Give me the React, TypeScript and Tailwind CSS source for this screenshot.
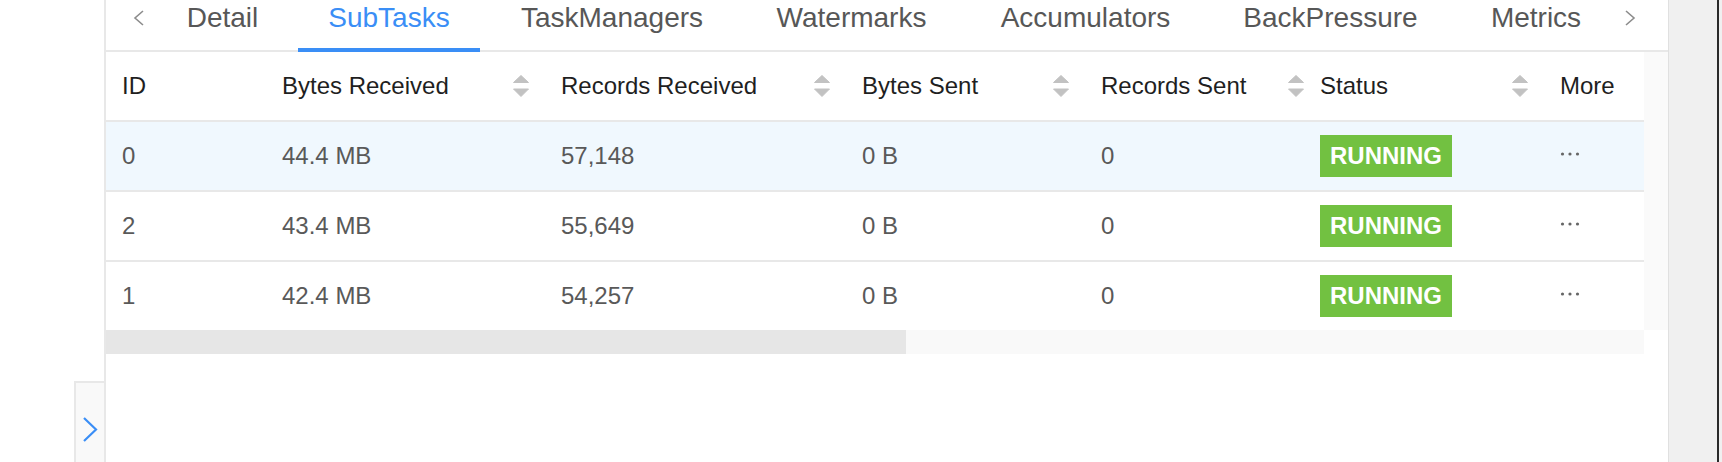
import React from "react";

const cols = "grid grid-cols-[160px_279px_301px_239px_219px_240px_100px]";

function SortIcon() {
  return (
    <svg width="16" height="23" viewBox="0 0 16 23" className="shrink-0">
      <path d="M8 0.5 L15.5 7.5 L0.5 7.5 Z" fill="#c2c2c2" strokeLinejoin="round" stroke="#c2c2c2" strokeWidth="1" />
      <path d="M0.5 14 L15.5 14 L8 21.5 Z" fill="#c2c2c2" strokeLinejoin="round" stroke="#c2c2c2" strokeWidth="1" />
    </svg>
  );
}

function Dots() {
  return (
    <svg width="20" height="6" viewBox="0 0 20 6">
      <circle cx="2.5" cy="3" r="1.6" fill="#666" />
      <circle cx="10" cy="3" r="1.6" fill="#666" />
      <circle cx="17.5" cy="3" r="1.6" fill="#666" />
    </svg>
  );
}

const tabs: { label: string; w: string; active?: boolean }[] = [
  { label: "Detail", w: "w-[135px]" },
  { label: "SubTasks", w: "w-[182px]", active: true },
  { label: "TaskManagers", w: "w-[248px]" },
  { label: "Watermarks", w: "w-[215px]" },
  { label: "Accumulators", w: "w-[237px]" },
  { label: "BackPressure", w: "w-[237px]" },
  { label: "Metrics", w: "w-[158px]" },
];

const rows = [
  { id: "0", br: "44.4 MB", rr: "57,148", hover: true },
  { id: "2", br: "43.4 MB", rr: "55,649" },
  { id: "1", br: "42.4 MB", rr: "54,257" },
];

export default function App() {
  return (
    <div className="w-[1722px] h-[462px] flex bg-white overflow-hidden font-['Liberation_Sans',Arial,sans-serif]">
      {/* left gutter with collapse button */}
      <div className="w-[104px] shrink-0 flex flex-col">
        <div className="flex-1" />
        <div className="ml-[74px] h-[81px] w-[30px] border-l-2 border-t-2 border-[#e8e8e8] bg-[#f9f9f9] flex justify-center pt-[34px]">
          <svg width="16" height="25" viewBox="0 0 16 25">
            <polyline points="2,1 14,12.5 2,24" fill="none" stroke="#3a8ef6" strokeWidth="2.2" />
          </svg>
        </div>
      </div>

      {/* main panel */}
      <div className="w-[1564px] shrink-0 border-l-2 border-[#e8e8e8] flex flex-col">
        {/* tab bar */}
        <div className="h-[52px] shrink-0 border-b-2 border-[#e8e8e8] flex items-start">
          <div className="w-[49px] shrink-0 pl-[26px] pt-[10px]">
            <svg width="12" height="16" viewBox="0 0 12 16">
              <polyline points="11,1 3,8 11,15" fill="none" stroke="#8c8c8c" strokeWidth="1.6" />
            </svg>
          </div>
          <div className="flex gap-[8px]">
            {tabs.map((t) => (
              <div key={t.label} className={`${t.w} relative h-[50px] flex justify-center pt-[4px]`}>
                <span
                  className={`text-[28px] leading-none whitespace-nowrap ${t.active ? "text-[#3a8ef6]" : "text-[#575757]"}`}
                >
                  {t.label}
                </span>
                {t.active && <div className="absolute left-0 right-0 bottom-[-2px] h-[4px] bg-[#3a8ef6]" />}
              </div>
            ))}
          </div>
          <div className="ml-auto pr-[31px] pt-[10px]">
            <svg width="12" height="16" viewBox="0 0 12 16">
              <polyline points="1,1 9,8 1,15" fill="none" stroke="#8c8c8c" strokeWidth="1.6" />
            </svg>
          </div>
        </div>

        {/* body */}
        <div className="flex">
          <div className="w-[1538px] shrink-0">
            {/* header */}
            <div className={`${cols} h-[70px] border-b-2 border-[#e8e8e8] text-[24px] text-[#1f1f1f]`}>
              <div className="flex items-center px-4">ID</div>
              <div className="flex items-center justify-between px-4">
                <span>Bytes Received</span>
                <SortIcon />
              </div>
              <div className="flex items-center justify-between px-4">
                <span>Records Received</span>
                <SortIcon />
              </div>
              <div className="flex items-center justify-between px-4">
                <span>Bytes Sent</span>
                <SortIcon />
              </div>
              <div className="flex items-center justify-between pl-4">
                <span>Records Sent</span>
                <SortIcon />
              </div>
              <div className="flex items-center justify-between px-4">
                <span>Status</span>
                <SortIcon />
              </div>
              <div className="flex items-center px-4">More</div>
            </div>

            {/* rows */}
            {rows.map((r, i) => (
              <div
                key={r.id}
                className={`${cols} ${i < rows.length - 1 ? "h-[70px] border-b-2 border-[#e8e8e8]" : "h-[68px]"} ${
                  r.hover ? "bg-[#f0f8fe]" : "bg-white"
                } text-[24px] text-[#595959]`}
              >
                <div className="flex items-center px-4">{r.id}</div>
                <div className="flex items-center px-4">{r.br}</div>
                <div className="flex items-center px-4">{r.rr}</div>
                <div className="flex items-center px-4">0 B</div>
                <div className="flex items-center px-4">0</div>
                <div className="flex items-center px-4">
                  <span className="h-[42px] flex items-center px-[10px] bg-[#72c141] text-white font-bold text-[24px]">
                    RUNNING
                  </span>
                </div>
                <div className="flex items-center px-4 pb-[4px]">
                  <Dots />
                </div>
              </div>
            ))}

            {/* horizontal scrollbar */}
            <div className="h-[24px] flex bg-[#f9f9f9]">
              <div className="w-[800px] bg-[#e6e6e6]" />
            </div>
          </div>
          <div className="w-[24px] h-[278px] shrink-0 bg-[#fafafa]" />
        </div>
      </div>

      {/* right gutter */}
      <div className="w-[49px] shrink-0 border-l border-[#e0e0e0] bg-[#f0f0f0]" />
      <div className="w-[2px] shrink-0 bg-[#2a2a2a]" />
      <div className="w-[3px] shrink-0 bg-[#f0f0f0]" />
    </div>
  );
}
